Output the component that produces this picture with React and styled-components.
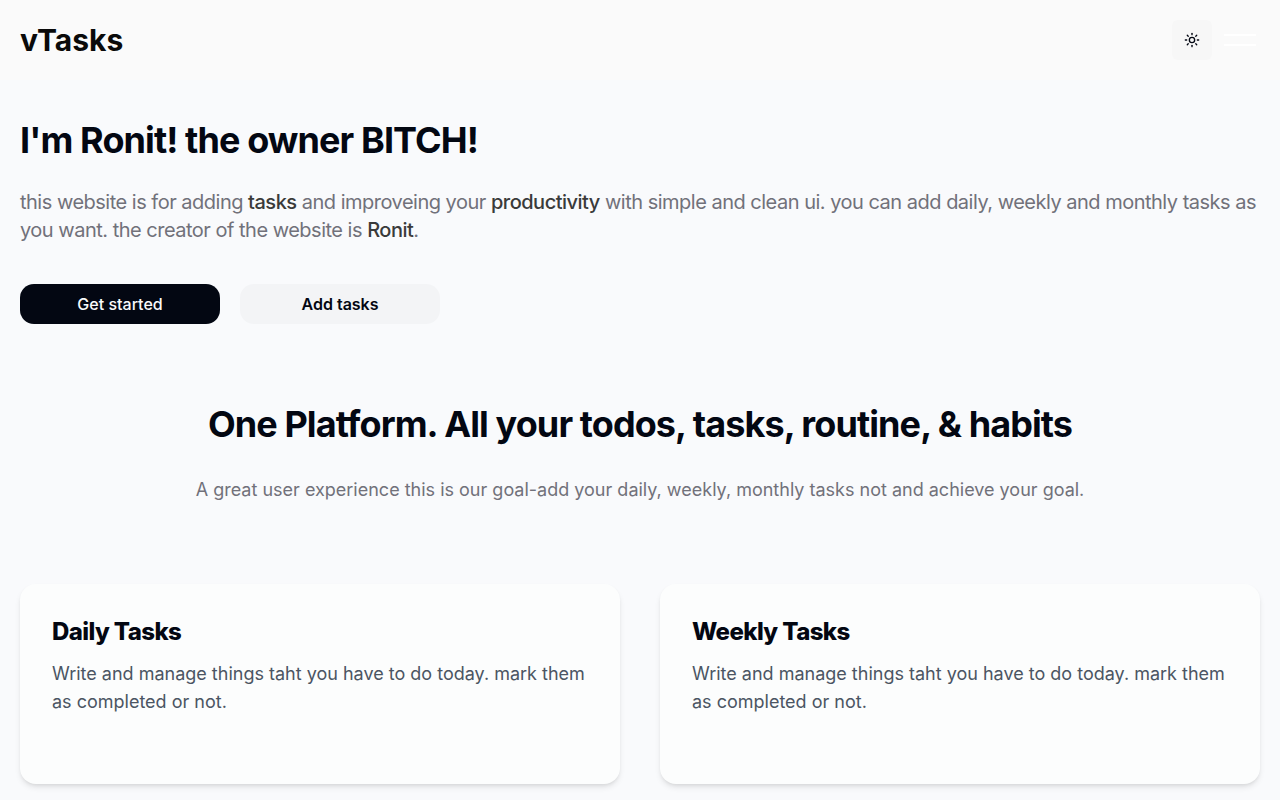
import { useState } from 'react';
import { Sun } from 'lucide-react';
import styled, { createGlobalStyle } from 'styled-components';

const cards = [
    { title: 'Daily Tasks', text: 'Write and manage things taht you have to do today. mark them as completed or not.' },
    { title: 'Weekly Tasks', text: 'Write and manage things taht you have to do today. mark them as completed or not.' },
];

const App = () => {
    const [menuOpen, setMenuOpen] = useState(false);

    return (
        <>
            <GlobalStyle />
            <Header>
                <Logo href="#">vTasks</Logo>
                <Controls>
                    <ThemeButton type="button" aria-label="Toggle theme"><Sun size={16} /></ThemeButton>
                    <MenuButton type="button" aria-label="Menu" aria-expanded={menuOpen} onClick={() => setMenuOpen(!menuOpen)}>
                        <span />
                        <span />
                    </MenuButton>
                </Controls>
            </Header>
            <Main>
                <Hero>
                    <Heading>I'm Ronit! the owner BITCH!</Heading>
                    <Intro>
                        this website is for adding <b>tasks</b> and improveing your <b>productivity</b> with simple and clean ui. you can add daily, weekly and monthly tasks as you want. the creator of the website is <b>Ronit</b>.
                    </Intro>
                    <Actions>
                        <ActionButton type="button" $primary>Get started</ActionButton>
                        <ActionButton type="button">Add tasks</ActionButton>
                    </Actions>
                </Hero>
                <Platform>
                    <Heading as="h2">One Platform. All your todos, tasks, routine, &amp; habits</Heading>
                    <Tagline>A great user experience this is our goal-add your daily, weekly, monthly tasks not and achieve your goal.</Tagline>
                </Platform>
                <CardGrid>
                    {cards.map((card) => (
                        <Card key={card.title}>
                            <CardTitle>{card.title}</CardTitle>
                            <CardText>{card.text}</CardText>
                        </Card>
                    ))}
                </CardGrid>
            </Main>
        </>
    );
}

const GlobalStyle = createGlobalStyle`
    * {
        box-sizing: border-box;
        margin: 0;
    }

    body {
        background: #f9fafc;
        color: #030712;
        font-family: Inter, sans-serif;
    }

    button {
        border: 0;
        font-family: inherit;
        color: inherit;
        cursor: pointer;
    }
`;

const Header = styled.header`
    display: flex;
    align-items: center;
    justify-content: space-between;
    height: 80px;
    padding: 0 20px;
    background: #fafafa;
`;

const Logo = styled.a`
    color: #0a0a0a;
    font-size: 30px;
    line-height: 36px;
    font-weight: 700;
    text-decoration: none;
`;

const Controls = styled.div`
    display: flex;
    align-items: center;
    gap: 8px;
`;

const ThemeButton = styled.button`
    display: flex;
    align-items: center;
    justify-content: center;
    width: 40px;
    height: 40px;
    padding: 0;
    border-radius: 6px;
    background: #f7f7f7;
`;

const MenuButton = styled.button`
    display: flex;
    flex-flow: column;
    align-items: center;
    justify-content: center;
    gap: 8px;
    width: 40px;
    height: 40px;
    padding: 0;
    background: transparent;

    span {
        width: 32px;
        height: 2px;
        background: #fff;
    }
`;

const Main = styled.main`
    padding: 40px 20px 16px;
`;

const Hero = styled.section`
    display: flex;
    flex-flow: column;
`;

const Heading = styled.h1`
    font-size: 36px;
    line-height: 40px;
    font-weight: 700;
    letter-spacing: -0.025em;
`;

const Intro = styled.p`
    margin-top: 28px;
    color: #71717a;
    font-size: 20px;
    line-height: 28px;
    letter-spacing: -0.025em;

    b {
        color: #3a3a3a;
        font-weight: 500;
    }
`;

const Actions = styled.div`
    display: flex;
    gap: 20px;
    margin-top: 40px;
`;

const ActionButton = styled.button`
    width: 200px;
    height: 40px;
    border-radius: 14px;
    background: ${(props) => props.$primary ? '#030712' : '#f3f4f6'};
    color: ${(props) => props.$primary ? '#f9fafb' : '#030712'};
    font-size: 16px;
    line-height: 24px;
    font-weight: ${(props) => props.$primary ? 500 : 600};
`;

const Platform = styled.section`
    display: flex;
    flex-flow: column;
    align-items: center;
    gap: 32px;
    margin-top: 80px;
    text-align: center;
`;

const Tagline = styled.p`
    color: #71717a;
    font-size: 18px;
    line-height: 28px;
`;

const CardGrid = styled.section`
    display: grid;
    grid-template-columns: repeat(2, 1fr);
    gap: 40px;
    margin-top: 80px;
`;

const Card = styled.article`
    min-height: 200px;
    padding: 32px;
    border-radius: 16px;
    background: #fcfdfd;
    box-shadow: 0 4px 6px -1px rgba(0, 0, 0, .1), 0 2px 4px -2px rgba(0, 0, 0, .1);
`;

const CardTitle = styled.h3`
    font-size: 24px;
    line-height: 32px;
    font-weight: 800;
    letter-spacing: -0.025em;
`;

const CardText = styled.p`
    margin-top: 12px;
    color: #4b5563;
    font-size: 18px;
    line-height: 28px;
`;

export default App;
